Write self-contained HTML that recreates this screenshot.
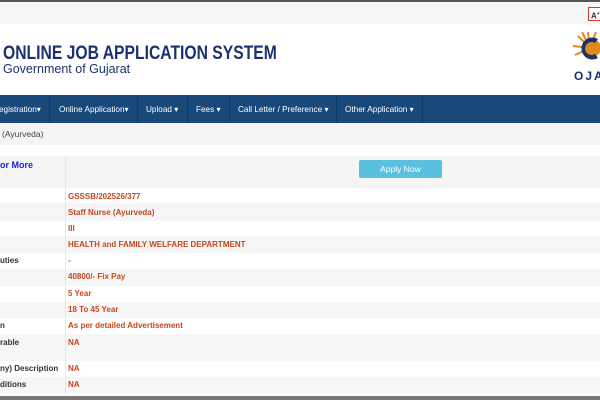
<!DOCTYPE html>
<html><head><style>
body{margin:0;width:600px;height:400px;overflow:hidden;background:#fff;font-family:"Liberation Sans",sans-serif;position:relative}
.a{position:absolute}
.nav span{position:absolute;top:104px;color:#fff;font-size:8.2px;white-space:nowrap}
.nav i{position:absolute;top:96px;width:1px;height:27px;background:#0f3a66}
.row{position:absolute;left:0;width:600px}
.l{position:absolute;left:0;font-size:8px;font-weight:bold;color:#333;white-space:nowrap}
.v{position:absolute;left:68px;font-size:8px;font-weight:bold;color:#c5461f;white-space:nowrap}
</style></head><body>
<div class="a" style="left:0;top:0;width:600px;height:2px;background:#555"></div>
<div class="a" style="left:0;top:2px;width:600px;height:22px;background:#f6f6f6"></div>
<div class="a" style="left:588px;top:7px;width:14px;height:12px;border:1px solid #d33;background:#fff;font-size:8px;font-weight:bold;color:#333;line-height:12px;padding-left:2px">A<sup style="font-size:5px">+</sup></div>
<div class="a" style="left:3px;top:42px;font-size:19.5px;font-weight:bold;color:#1b3170;white-space:nowrap;transform:scaleX(0.805);transform-origin:left">ONLINE JOB APPLICATION SYSTEM</div>
<div class="a" style="left:3px;top:62px;font-size:12.5px;color:#1b3170;white-space:nowrap">Government of Gujarat</div>
<svg class="a" style="left:570px;top:28px" width="30" height="60" viewBox="0 0 30 60">
<g stroke="#e08a1a" stroke-width="2">
<line x1="20" y1="20" x2="18" y2="4"/><line x1="20" y1="20" x2="8" y2="8"/><line x1="20" y1="20" x2="3" y2="18"/><line x1="20" y1="20" x2="5" y2="27"/><line x1="20" y1="20" x2="26" y2="4"/><line x1="20" y1="20" x2="12" y2="4"/>
</g>
<circle cx="22" cy="20" r="9" fill="#e08a1a"/>
<path d="M28 11 A11 11 0 1 0 28 30 L25 26 A6.5 6.5 0 1 1 25 15 Z" fill="#1b3170"/>
<text x="4" y="52" font-family="Liberation Sans" font-weight="bold" font-size="12" fill="#1b3170" letter-spacing="2">OJA</text>
</svg>
<div class="a" style="left:0;top:95px;width:600px;height:28px;background:#19497b"></div>
<div class="nav">
<span style="left:-1px">egistration▾</span><i style="left:49px"></i>
<span style="left:59px">Online Application▾</span><i style="left:137px"></i>
<span style="left:146px">Upload ▾</span><i style="left:187px"></i>
<span style="left:196px">Fees ▾</span><i style="left:229px"></i>
<span style="left:238px">Call Letter / Preference ▾</span><i style="left:336px"></i>
<span style="left:345px">Other Application ▾</span><i style="left:422px"></i>
</div>
<div class="a" style="left:0;top:123px;width:600px;height:22px;background:#f4f4f4"></div>
<div class="a" style="left:2px;top:129px;font-size:8.5px;color:#444">(Ayurveda)</div>

<div class="row" style="top:156px;height:32px;background:#f5f5f5"></div>
<div class="a" style="left:0;top:160px;font-size:9px;font-weight:bold;color:#1a1aee">or More</div>
<div class="a" style="left:359px;top:160px;width:83px;height:18px;background:#5bc0de;border-radius:2px;color:#fff;font-size:8.5px;text-align:center;line-height:18px">Apply Now</div>

<div class="row" style="top:203px;height:18px;background:#f6f6f6"></div>
<div class="row" style="top:236px;height:17px;background:#f6f6f6"></div>
<div class="row" style="top:269px;height:17px;background:#f6f6f6"></div>
<div class="row" style="top:302px;height:16px;background:#f6f6f6"></div>
<div class="row" style="top:334px;height:27px;background:#f6f6f6"></div>
<div class="row" style="top:377px;height:16px;background:#f6f6f6"></div>
<div class="a" style="left:65px;top:156px;width:1px;height:238px;background:#e6e6e6"></div>

<div class="v" style="top:192px">GSSSB/202526/377</div>
<div class="v" style="top:208px">Staff Nurse (Ayurveda)</div>
<div class="v" style="top:224px">III</div>
<div class="v" style="top:240px">HEALTH and FAMILY WELFARE DEPARTMENT</div>
<div class="l" style="top:256px">uties</div><div class="v" style="top:256px">-</div>
<div class="v" style="top:272px">40800/- Fix Pay</div>
<div class="v" style="top:289px">5 Year</div>
<div class="v" style="top:305px">18 To 45 Year</div>
<div class="l" style="top:321px">n</div><div class="v" style="top:321px">As per detailed Advertisement</div>
<div class="l" style="top:338px">rable</div><div class="v" style="top:338px">NA</div>
<div class="l" style="top:364px">ny) Description</div><div class="v" style="top:364px">NA</div>
<div class="l" style="top:380px">ditions</div><div class="v" style="top:380px">NA</div>
<div class="a" style="left:0;top:396px;width:600px;height:4px;background:#777"></div>
</body></html>
